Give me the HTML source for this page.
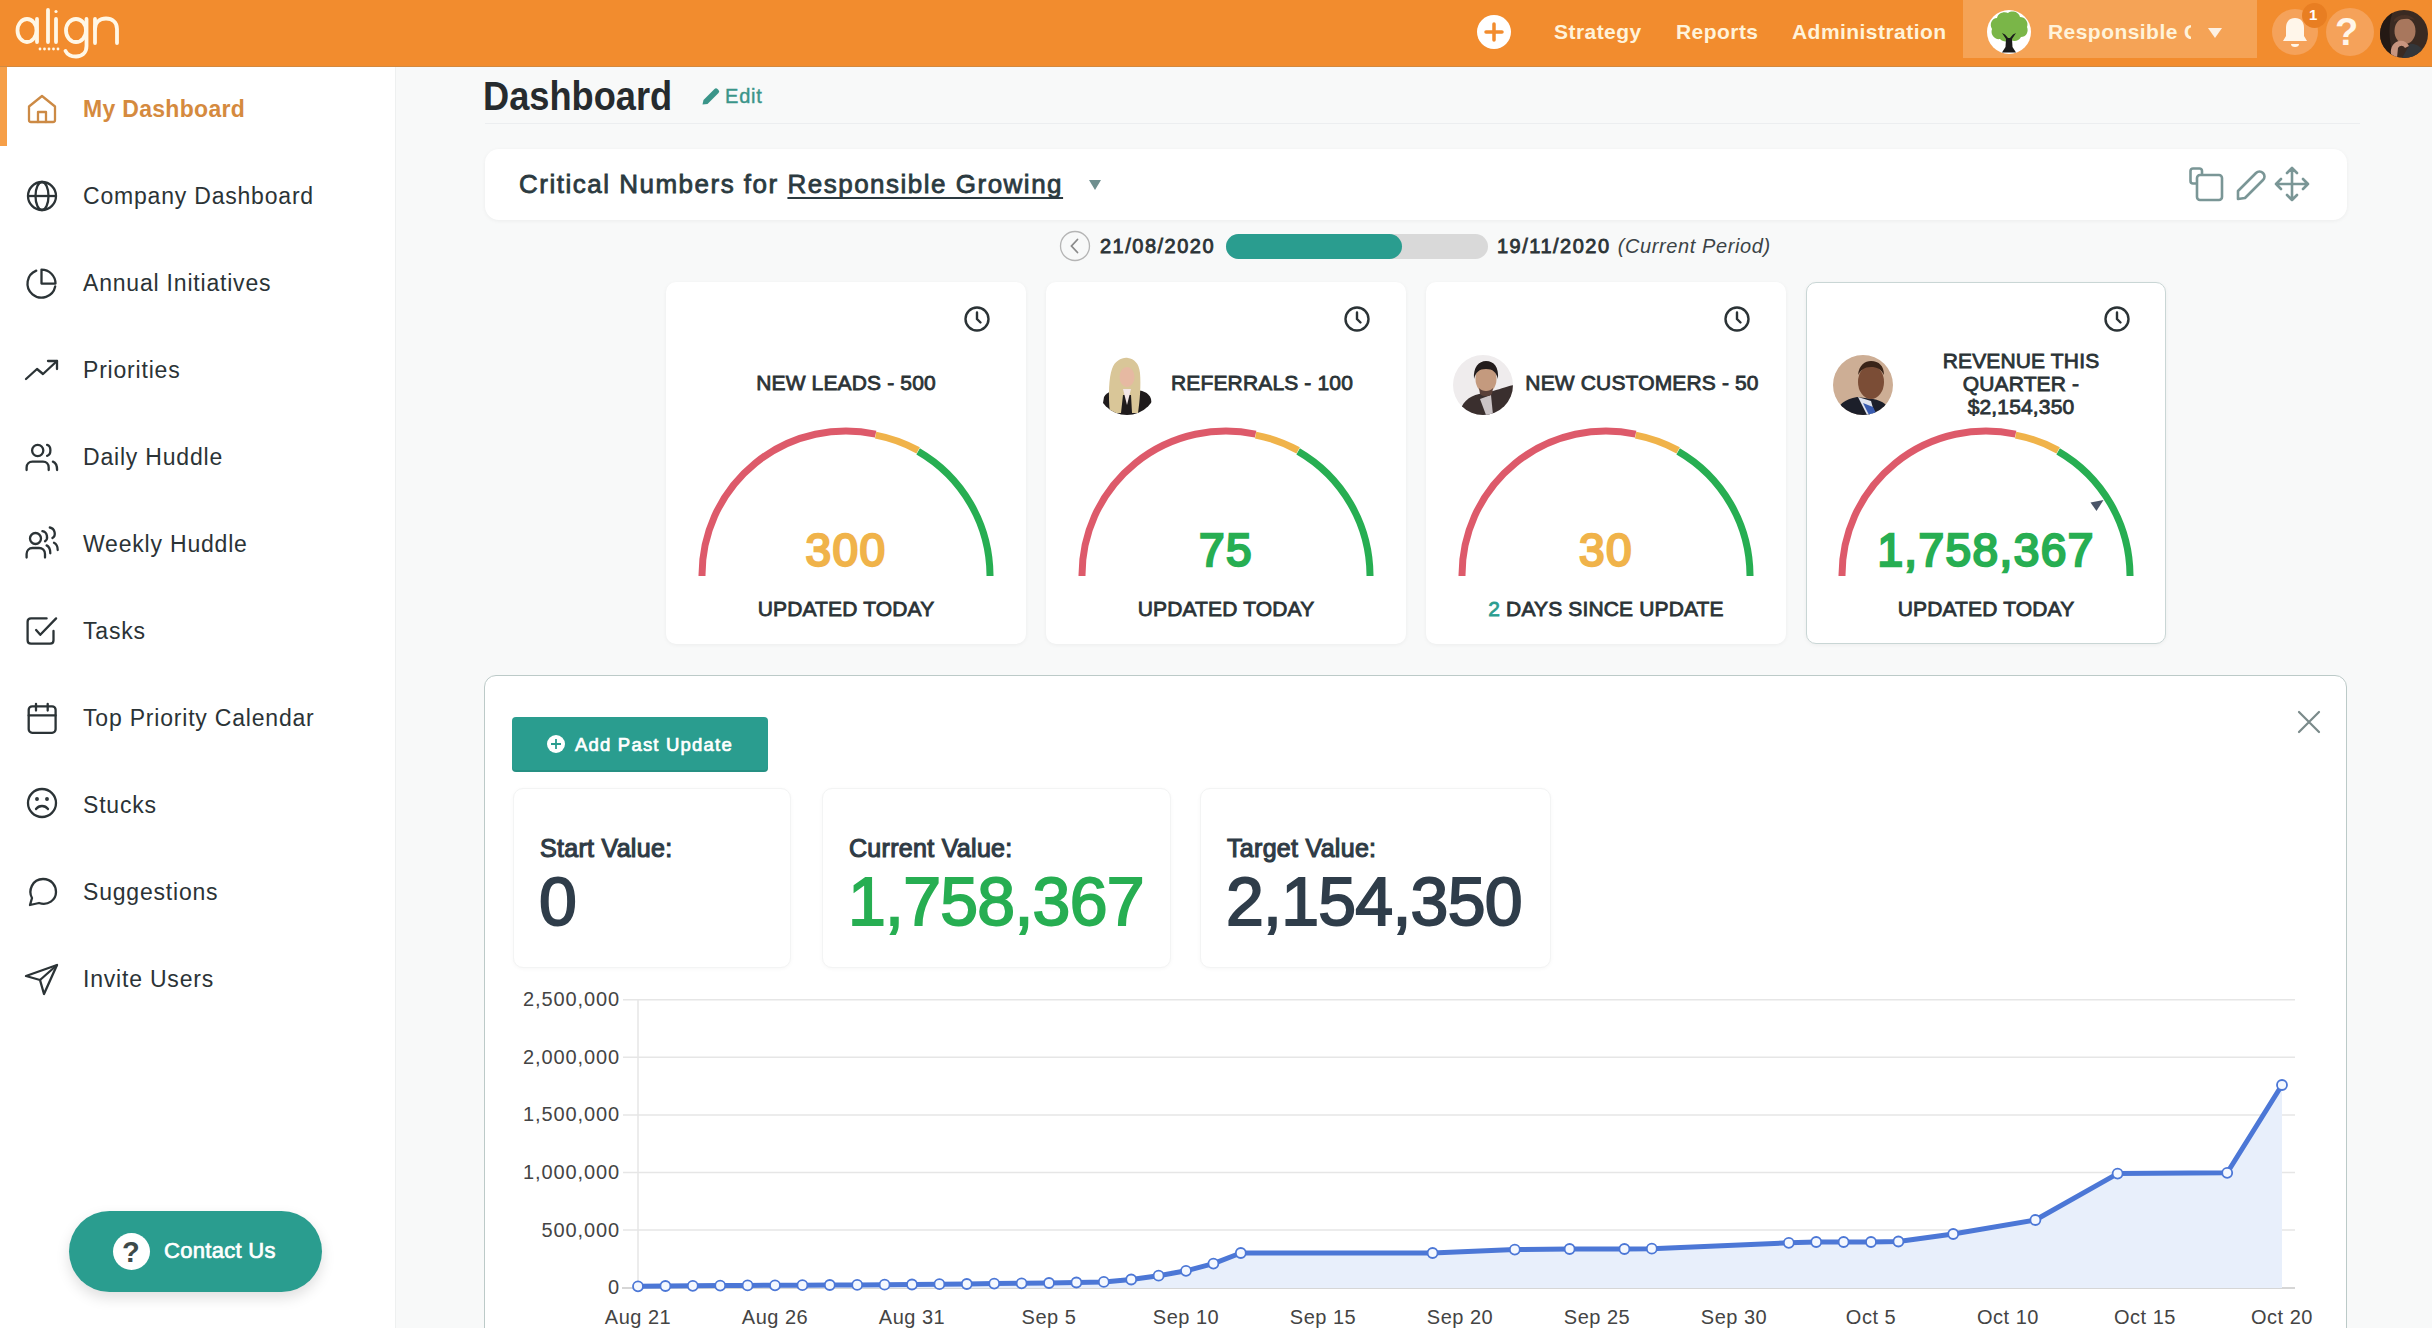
<!DOCTYPE html>
<html><head><meta charset="utf-8">
<style>
*{box-sizing:border-box;margin:0;padding:0}
html,body{width:2432px;height:1328px;overflow:hidden}
body{position:relative;background:#f8f9f9;font-family:"Liberation Sans",sans-serif;color:#2b3336}
.abs{position:absolute}
.t{position:absolute;white-space:nowrap;line-height:1}
#hdr{left:0;top:0;width:2432px;height:67px;background:#f28c2e;border-bottom:1.5px solid #d3893f}
#side{left:0;top:67px;width:396px;height:1261px;background:#fff;border-right:1px solid #eef0f0}
#activebar{left:0;top:67px;width:7px;height:79px;background:#f69f48}
.mi{position:absolute;left:83px;font-size:23px;letter-spacing:0.8px;color:#2b3336;white-space:nowrap;line-height:1}
.ic{position:absolute;left:24px;width:36px;height:36px}
.av{display:inline-block;width:60px;height:60px;border-radius:50%;margin-right:13px;flex:none;position:relative}
.av.abs{position:absolute;margin:0}
.avw{background:radial-gradient(ellipse 10px 14px at 50% 38%,#e9c3a6 0,#e2b898 90%,transparent 100%),radial-gradient(ellipse 18px 30px at 50% 45%,#e6d1a0 0,#d6b77e 80%,transparent 100%),radial-gradient(ellipse 30px 18px at 50% 100%,#222 0,#333 85%,transparent 100%),#fff}
.avm1{background:radial-gradient(ellipse 12px 15px at 55% 40%,#c99a7d 0,#b98a6c 85%,transparent 100%),radial-gradient(ellipse 15px 10px at 55% 18%,#2a2220 0,#2a2220 85%,transparent 100%),radial-gradient(ellipse 34px 20px at 50% 100%,#3a302c 0,#4a3c36 85%,transparent 100%),#ececec}
.avm2{background:radial-gradient(ellipse 13px 16px at 50% 42%,#5a3a2a 0,#4a2e20 85%,transparent 100%),radial-gradient(ellipse 34px 20px at 50% 100%,#1e2a44 0,#2a3550 85%,transparent 100%),#cbb29c}
.card{position:absolute;background:#fff;border-radius:14px;box-shadow:0 1px 4px rgba(0,0,0,0.05)}
</style></head><body>

<!-- HEADER -->
<div id="hdr" class="abs"></div>
<svg id="logo" class="abs" style="left:0;top:0" width="130" height="66" viewBox="0 0 130 66" fill="none" stroke="#fff7e6" stroke-width="3.8" stroke-linecap="round">
<ellipse cx="27" cy="30.5" rx="9.5" ry="11.5"/><path d="M37 19V42"/>
<path d="M48 10V42"/><path d="M56 19V42"/><circle cx="56" cy="11.5" r="1.6" fill="#fff7e6" stroke="none"/>
<circle cx="40" cy="49" r="1.4" fill="#fff7e6" stroke="none"/><circle cx="44.5" cy="49" r="1.4" fill="#fff7e6" stroke="none"/><circle cx="49" cy="49" r="1.4" fill="#fff7e6" stroke="none"/><circle cx="53.5" cy="49" r="1.4" fill="#fff7e6" stroke="none"/><circle cx="58" cy="49" r="1.4" fill="#fff7e6" stroke="none"/>
<ellipse cx="76" cy="30.5" rx="10" ry="11.5"/><path d="M86.5 19V46C86.5 53 82 56.5 76 56.5C71 56.5 67 54 65.5 51"/>
<path d="M95 19V43"/><path d="M95 29C95 22 100 18.5 106 18.5C112 18.5 117 22 117 29V43"/>
</svg>

<div class="abs" style="left:1477px;top:15px;width:34px;height:34px;border-radius:50%;background:#fff"></div>
<svg class="abs" style="left:1477px;top:15px" width="34" height="34"><path d="M17 9v16M9 17h16" stroke="#f28c2e" stroke-width="3.5" stroke-linecap="round"/></svg>

<div id="nav1" class="t" style="left:1554px;top:21px;font-size:21px;font-weight:bold;color:#fff3da;letter-spacing:0.45px">Strategy</div>
<div id="nav2" class="t" style="left:1676px;top:21px;font-size:21px;font-weight:bold;color:#fff3da;letter-spacing:0.45px">Reports</div>
<div id="nav3" class="t" style="left:1792px;top:21px;font-size:21px;font-weight:bold;color:#fff3da;letter-spacing:0.45px">Administration</div>

<div class="abs" style="left:1963px;top:0;width:294px;height:58px;background:#f5a356"></div>
<div class="abs" style="left:1987px;top:10px;width:44px;height:44px;border-radius:50%;background:#fff"></div>
<svg class="abs" style="left:1987px;top:10px" width="44" height="44" viewBox="0 0 44 44">
 <path d="M5 19 C2 14 5 8 10 8 C11 3 17 1 21 3 C25 0 32 2 33 7 C38 7 42 12 40 17 C42 22 39 27 34 27 C32 31 27 32 24 30 C21 32 15 32 13 29 C8 30 3 25 5 19 Z" fill="#7ab648"/>
 <path d="M15 23 L19 29 L18.5 37 L15 42.5 H29 L25.5 37 L25 29 L29 23 L26 24.5 L23 28 L21 28 L18 24.5 Z" fill="#1b1b1b"/>
</svg>
<div id="comp" class="t" style="left:2048px;top:21px;font-size:21px;font-weight:bold;color:#fff3da;letter-spacing:0.45px;width:143px;overflow:hidden">Responsible Growing</div>
<svg class="abs" style="left:2207px;top:27px" width="16" height="12"><path d="M1 1h14L8 11z" fill="#fdf1e4"/></svg>

<div class="abs" style="left:2272px;top:9px;width:46px;height:46px;border-radius:50%;background:#f5a25a"></div>
<svg class="abs" style="left:2272px;top:9px" width="46" height="46"><path d="M23 9c-6 0-9 4-9 10v8l-3 5h24l-3-5v-8c0-6-3-10-9-10z" fill="#fff6ea"/><path d="M19 35a4 3 0 0 0 8 0z" fill="#fff6ea"/></svg>
<div class="abs" style="left:2302px;top:3px;width:25px;height:25px;border-radius:50%;background:#e87e22"></div>
<div class="t" style="left:2309px;top:7px;font-size:15px;font-weight:bold;color:#fff">1</div>
<div class="abs" style="left:2326px;top:8px;width:48px;height:48px;border-radius:50%;background:#f5a25a"></div>
<div class="t" style="left:2335px;top:13px;font-size:38px;font-weight:bold;color:#fff6ea">?</div>
<svg class="abs" style="left:2380px;top:10px" width="48" height="48" viewBox="0 0 48 48"><defs><clipPath id="ch"><circle cx="24" cy="24" r="24"/></clipPath></defs><g clip-path="url(#ch)">
<rect width="48" height="48" fill="#3a2a22"/>
<path d="M0 0 H14 C8 10 8 30 14 48 H0 Z" fill="#241914"/>
<ellipse cx="25" cy="21" rx="10.5" ry="13" fill="#a8775d"/>
<path d="M14 10 C18 4 30 3 35 10 C31 8 20 8 14 12 Z" fill="#4a3226"/>
<path d="M30 34 C36 33 44 38 48 48 H22 Z" fill="#33363a"/>
<path d="M11 44 C10 37 14 32 19 31 C23 30 27 32 29 36 L25 38 C23 35 20 35 18 38 L17 48 H10 Z" fill="#c8957f"/>
</g></svg>

<!-- SIDEBAR -->
<div id="side" class="abs"></div>
<div id="activebar" class="abs"></div>


<!-- menu -->
<svg class="ic" style="top:91px" width="36" height="36" viewBox="0 0 36 36" fill="none" stroke="#cc8a45" stroke-width="2.3" stroke-linejoin="round" stroke-linecap="round"><path d="M5 15.5 L18 5 L31 15.5 V29 Q31 31 29 31 H7 Q5 31 5 29 Z"/><path d="M14 31 V21 H22 V31"/></svg>
<div id="m0" class="mi" style="top:98px;color:#d58a3e;font-weight:bold;letter-spacing:0.3px">My Dashboard</div>

<svg class="ic" style="top:178px" width="36" height="36" viewBox="0 0 36 36" fill="none" stroke="#2b3336" stroke-width="2.3"><circle cx="18" cy="18" r="14"/><path d="M4 18h28"/><ellipse cx="18" cy="18" rx="6.5" ry="14"/></svg>
<div id="m1" class="mi" style="top:185px">Company Dashboard</div>

<svg class="ic" style="top:265px" width="36" height="36" viewBox="0 0 36 36" fill="none" stroke="#2b3336" stroke-width="2.3" stroke-linecap="round" stroke-linejoin="round"><path d="M17.5 4.6 V18.6 H31.5 A14 14 0 0 0 17.5 4.6 Z"/><path d="M12.26 5.62 A14 14 0 1 0 31.19 21.5"/></svg>
<div id="m2" class="mi" style="top:272px">Annual Initiatives</div>

<svg class="ic" style="top:352px" width="36" height="36" viewBox="0 0 36 36" fill="none" stroke="#2b3336" stroke-width="2.3" stroke-linecap="round" stroke-linejoin="round"><path d="M2 27 L13 17 L19 22 L33 9"/><path d="M24 9 H33 V17"/></svg>
<div id="m3" class="mi" style="top:359px">Priorities</div>

<svg class="ic" style="top:439px" width="36" height="36" viewBox="0 0 36 36" fill="none" stroke="#2b3336" stroke-width="2.3" stroke-linecap="round" stroke-linejoin="round"><circle cx="13.7" cy="11.5" r="5.6"/><path d="M23.1 5.8 C27.5 6.8 27.5 15.8 23.1 16.8"/><path d="M2.6 31 V28.5 C2.6 25 5 22.6 8.5 22.6 H19 C22.5 22.6 24.7 25 24.7 28.5 V31"/><path d="M28.9 22.6 C31.7 23.6 33.1 26.5 33.1 31"/></svg>
<div id="m4" class="mi" style="top:446px">Daily Huddle</div>

<svg class="ic" style="top:526px" width="36" height="36" viewBox="0 0 36 36" fill="none" stroke="#2b3336" stroke-width="2.3" stroke-linecap="round" stroke-linejoin="round"><circle cx="11.5" cy="12.5" r="5.5"/><path d="M18.4 5.2 C23.5 6 24.5 13 21 15.2"/><path d="M25.8 1.5 C31 2.5 32.5 9.5 28.4 12"/><path d="M2.6 31.5 V28 C2.6 24.5 5 22 8.5 22 H15 C18.5 22 21 24.5 21 28 V31.5"/><path d="M22.6 19.4 C25 20.5 26.3 23.5 26.3 27.3"/><path d="M30 16.7 C32.3 17.8 33.7 20.5 33.7 24"/></svg>
<div id="m5" class="mi" style="top:533px">Weekly Huddle</div>

<svg class="ic" style="top:613px" width="36" height="36" viewBox="0 0 36 36" fill="none" stroke="#2b3336" stroke-width="2.3" stroke-linecap="round" stroke-linejoin="round"><path d="M22.6 5.4 H7 Q3.6 5.4 3.6 8.8 V27.3 Q3.6 30.7 7 30.7 H26.1 Q29.5 30.7 29.5 27.3 V18"/><path d="M12.1 17 L16.3 21.8 L32.1 5.4"/></svg>
<div id="m6" class="mi" style="top:620px">Tasks</div>

<svg class="ic" style="top:700px" width="36" height="36" viewBox="0 0 36 36" fill="none" stroke="#2b3336" stroke-width="2.3" stroke-linecap="round" stroke-linejoin="round"><rect x="4.7" y="6.3" width="26.9" height="26.5" rx="3.5"/><path d="M4.7 15.4 H31.6 M12 3.8 V10.6 M23.7 3.8 V10.6"/></svg>
<div id="m7" class="mi" style="top:707px">Top Priority Calendar</div>

<svg class="ic" style="top:785px" width="36" height="36" viewBox="0 0 36 36" fill="none" stroke="#2b3336" stroke-width="2.3" stroke-linecap="round"><circle cx="18" cy="18" r="14"/><circle cx="13" cy="14" r="0.8" fill="#2b3336"/><circle cx="23" cy="14" r="0.8" fill="#2b3336"/><path d="M12 24 C15 20 21 20 24 24"/></svg>
<div id="m8" class="mi" style="top:794px">Stucks</div>

<svg class="ic" style="top:874px" width="36" height="36" viewBox="0 0 36 36" fill="none" stroke="#2b3336" stroke-width="2.3" stroke-linejoin="round"><path d="M6 31 L8 24 C4 17 8 5 19 5 C28 5 32 12 32 18 C32 26 24 32 15 29 Z"/></svg>
<div id="m9" class="mi" style="top:881px">Suggestions</div>

<svg class="ic" style="top:961px" width="36" height="36" viewBox="0 0 36 36" fill="none" stroke="#2b3336" stroke-width="2.3" stroke-linejoin="round"><path d="M2 15 L33 4 L20 33 L16 19 Z"/><path d="M16 19 L33 4"/></svg>
<div id="m10" class="mi" style="top:968px">Invite Users</div>

<!-- contact us -->
<div id="contact" class="abs" style="left:69px;top:1211px;width:253px;height:81px;border-radius:41px;background:#2a9d8f;box-shadow:0 6px 14px rgba(0,0,0,0.13)"></div>
<div class="abs" style="left:113px;top:1233px;width:37px;height:37px;border-radius:50%;background:#fff"></div>
<div class="t" style="left:122px;top:1238px;font-size:29px;font-weight:bold;color:#3d4a4a">?</div>
<div id="contactt" class="t" style="left:164px;top:1240px;font-size:22px;color:#fff;letter-spacing:0.3px;-webkit-text-stroke:0.7px #fff">Contact Us</div>

<!-- CONTENT -->
<div id="ttl" class="t" style="left:483px;top:76px;font-size:40px;font-weight:bold;color:#262b2e;letter-spacing:0px;transform:scaleX(0.905);transform-origin:0 0">Dashboard</div>
<svg class="abs" style="left:700px;top:86px" width="22" height="20" viewBox="0 0 22 20"><path d="M2.5 18.5 L3.5 14 L14.5 3 Q16 1.5 17.5 3 L18.5 4 Q20 5.5 18.5 7 L7.5 18 Z" fill="#3a9589"/></svg>
<div id="edit" class="t" style="left:725px;top:86px;font-size:20px;color:#3a9589;letter-spacing:0.8px;-webkit-text-stroke:0.4px #3a9589">Edit</div>
<div class="abs" style="left:485px;top:123px;width:1875px;height:1px;background:#eceef0"></div>
<div id="cn" class="card" style="left:485px;top:149px;width:1862px;height:71px;border-radius:14px"></div>
<div id="cnt" class="t" style="left:519px;top:171px;font-size:26px;color:#2b3a40;letter-spacing:1.5px;-webkit-text-stroke:0.8px #2b3a40">Critical Numbers for <span style="text-decoration:underline;text-underline-offset:4px;text-decoration-thickness:2px;text-decoration-skip-ink:none">Responsible Growing</span></div>
<svg class="abs" style="left:1088px;top:179px" width="14" height="12"><path d="M1 1h12L7 11z" fill="#6f8f8f"/></svg>
<svg class="abs" style="left:2186px;top:164px" width="128" height="40" viewBox="0 0 128 40" fill="none" stroke="#7a9696" stroke-width="2.6" stroke-linecap="round" stroke-linejoin="round">
<path d="M16 10 V7 C16 5.5 15 4.5 13.5 4.5 H7 C5.5 4.5 4.5 5.5 4.5 7 V17 C4.5 18.5 5.5 19.5 7 19.5 H10"/>
<rect x="11" y="11" width="25" height="25" rx="3"/>
<path d="M52 35 L52 27 L70 9 C72 7 75 7 77 9 C79 11 79 14 77 16 L59 34 Z"/>
<path d="M106 4 V36 M90 20 H122 M101 9 L106 4 L111 9 M101 31 L106 36 L111 31 M95 15 L90 20 L95 25 M117 15 L122 20 L117 25"/>
</svg>
<svg class="abs" style="left:1059px;top:230px" width="32" height="32"><circle cx="16" cy="16" r="14.5" fill="none" stroke="#b5b5b5" stroke-width="1.3"/><path d="M18.5 9.5 L12.5 16 L18.5 22.5" fill="none" stroke="#8a8a8a" stroke-width="1.8" stroke-linecap="round"/></svg>
<div id="d1" class="t" style="left:1100px;top:236px;font-size:20px;color:#2b3336;letter-spacing:1.5px;-webkit-text-stroke:0.8px #2b3336">21/08/2020</div>
<div class="abs" style="left:1226px;top:234px;width:262px;height:25px;border-radius:12.5px;background:#d9d9d9"></div>
<div class="abs" style="left:1226px;top:234px;width:176px;height:25px;border-radius:12.5px;background:#2a9d8f"></div>
<div id="d2" class="t" style="left:1497px;top:236px;font-size:20px;color:#2b3336;letter-spacing:1.5px;-webkit-text-stroke:0.8px #2b3336">19/11/2020 <i style="color:#3b4346;letter-spacing:0.6px;-webkit-text-stroke:0px">(Current Period)</i></div>
<div id="k0" class="card" style="left:666px;top:282px;width:360px;height:362px;border-radius:10px;"></div>
<svg class="abs" style="left:963px;top:305px" width="28" height="28" viewBox="0 0 28 28" fill="none" stroke="#2b3336" stroke-width="2.4" stroke-linecap="round"><circle cx="14" cy="14" r="11.5"/><path d="M14 7.5 V14 L17.5 17.5"/></svg>
<svg class="abs" style="left:666px;top:283px" width="360" height="361" viewBox="666 283 360 361"><path d="M702.00 576.00 L702.00 575.00 A144 144 0 0 1 875.64 434.08" fill="none" stroke="#dd5a6a" stroke-width="7"/><path d="M875.64 435.08 A144 144 0 0 1 918.13 450.37" fill="none" stroke="#f0b34a" stroke-width="7"/><path d="M918.13 451.37 A144 144 0 0 1 990.00 575.00 L990.00 576.00" fill="none" stroke="#27ae52" stroke-width="7"/></svg>
<div class="t" style="left:666px;top:372px;width:360px;text-align:center;font-size:21px;color:#2b3336;letter-spacing:0.15px;-webkit-text-stroke:0.8px #2b3336"><span id="kt0">NEW LEADS - 500</span></div>
<div id="kv0" class="t" style="left:666px;top:527px;width:360px;text-align:center;font-size:46px;color:#f0b34a;letter-spacing:1.4px;-webkit-text-stroke:2.4px #f0b34a">300</div>
<div id="kf0" class="t" style="left:666px;top:598px;width:360px;text-align:center;font-size:21px;color:#2b3336;letter-spacing:0.15px;-webkit-text-stroke:0.8px #2b3336">UPDATED TODAY</div>
<div id="k1" class="card" style="left:1046px;top:282px;width:360px;height:362px;border-radius:10px;"></div>
<svg class="abs" style="left:1343px;top:305px" width="28" height="28" viewBox="0 0 28 28" fill="none" stroke="#2b3336" stroke-width="2.4" stroke-linecap="round"><circle cx="14" cy="14" r="11.5"/><path d="M14 7.5 V14 L17.5 17.5"/></svg>
<svg class="abs" style="left:1046px;top:283px" width="360" height="361" viewBox="1046 283 360 361"><path d="M1082.00 576.00 L1082.00 575.00 A144 144 0 0 1 1255.64 434.08" fill="none" stroke="#dd5a6a" stroke-width="7"/><path d="M1255.64 435.08 A144 144 0 0 1 1298.13 450.37" fill="none" stroke="#f0b34a" stroke-width="7"/><path d="M1298.13 451.37 A144 144 0 0 1 1370.00 575.00 L1370.00 576.00" fill="none" stroke="#27ae52" stroke-width="7"/></svg>
<div class="t" style="left:1082px;top:372px;width:360px;text-align:center;font-size:21px;color:#2b3336;letter-spacing:0.15px;-webkit-text-stroke:0.8px #2b3336"><span id="kt1">REFERRALS - 100</span></div>
<svg class="abs" style="left:1097px;top:355px" width="60" height="60" viewBox="0 0 60 60"><defs><clipPath id="cw"><circle cx="30" cy="30" r="30"/></clipPath></defs><g clip-path="url(#cw)">
<rect width="60" height="60" fill="#fff"/>
<path d="M7 42 C10 36 18 35 22 35 L38 35 C44 35 52 37 54 44 L56 60 L4 60 Z" fill="#1f1b1c"/>
<path d="M13 58 C11 40 12 22 15 14 C18 5 26 2 31 3 C37 4 42 8 43 18 C44 30 43 45 41 58 L35 58 L34 40 L26 40 L24 58 Z" fill="#d9c698"/>
<ellipse cx="30" cy="22" rx="7.5" ry="10" fill="#e6b9a2"/>
<path d="M26 34 L30 50 L34 34 Z" fill="#f3e6e6"/>
</g></svg>
<div id="kv1" class="t" style="left:1046px;top:527px;width:360px;text-align:center;font-size:46px;color:#27ae52;letter-spacing:1.4px;-webkit-text-stroke:2.4px #27ae52">75</div>
<div id="kf1" class="t" style="left:1046px;top:598px;width:360px;text-align:center;font-size:21px;color:#2b3336;letter-spacing:0.15px;-webkit-text-stroke:0.8px #2b3336">UPDATED TODAY</div>
<div id="k2" class="card" style="left:1426px;top:282px;width:360px;height:362px;border-radius:10px;"></div>
<svg class="abs" style="left:1723px;top:305px" width="28" height="28" viewBox="0 0 28 28" fill="none" stroke="#2b3336" stroke-width="2.4" stroke-linecap="round"><circle cx="14" cy="14" r="11.5"/><path d="M14 7.5 V14 L17.5 17.5"/></svg>
<svg class="abs" style="left:1426px;top:283px" width="360" height="361" viewBox="1426 283 360 361"><path d="M1462.00 576.00 L1462.00 575.00 A144 144 0 0 1 1635.64 434.08" fill="none" stroke="#dd5a6a" stroke-width="7"/><path d="M1635.64 435.08 A144 144 0 0 1 1678.13 450.37" fill="none" stroke="#f0b34a" stroke-width="7"/><path d="M1678.13 451.37 A144 144 0 0 1 1750.00 575.00 L1750.00 576.00" fill="none" stroke="#27ae52" stroke-width="7"/></svg>
<div class="t" style="left:1462px;top:372px;width:360px;text-align:center;font-size:21px;color:#2b3336;letter-spacing:0.15px;-webkit-text-stroke:0.8px #2b3336"><span id="kt2">NEW CUSTOMERS - 50</span></div>
<svg class="abs" style="left:1453px;top:355px" width="60" height="60" viewBox="0 0 60 60"><defs><clipPath id="cm1"><circle cx="30" cy="30" r="30"/></clipPath></defs><g clip-path="url(#cm1)">
<rect width="60" height="60" fill="#efeced"/>
<path d="M6 60 C8 48 16 41 26 39 L40 36 C50 33 58 30 62 30 L62 60 Z" fill="#3a2f2e"/>
<path d="M27 44 L33 60 L40 60 L38 40 Z" fill="#cbc4c6"/>
<ellipse cx="33" cy="24" rx="10.5" ry="14" fill="#c49a7e"/>
<path d="M21 24 C20 12 26 6 33 6 C41 6 46 12 45 24 C43 17 40 14 33 14 C26 14 23 17 21 24 Z" fill="#231c1c"/>
<path d="M26 33 C29 37 37 37 40 33 L39 39 C36 42 30 42 27 39 Z" fill="#5a4038"/>
</g></svg>
<div id="kv2" class="t" style="left:1426px;top:527px;width:360px;text-align:center;font-size:46px;color:#f0b34a;letter-spacing:1.4px;-webkit-text-stroke:2.4px #f0b34a">30</div>
<div id="kf2" class="t" style="left:1426px;top:598px;width:360px;text-align:center;font-size:21px;color:#2b3336;letter-spacing:0.15px;-webkit-text-stroke:0.8px #2b3336"><span style="color:#2a9d8f;-webkit-text-stroke-color:#2a9d8f">2</span> DAYS SINCE UPDATE</div>
<div id="k3" class="card" style="left:1806px;top:282px;width:360px;height:362px;border-radius:10px;border:1.5px solid #c9d6d5;"></div>
<svg class="abs" style="left:2103px;top:305px" width="28" height="28" viewBox="0 0 28 28" fill="none" stroke="#2b3336" stroke-width="2.4" stroke-linecap="round"><circle cx="14" cy="14" r="11.5"/><path d="M14 7.5 V14 L17.5 17.5"/></svg>
<svg class="abs" style="left:1806px;top:283px" width="360" height="361" viewBox="1806 283 360 361"><path d="M1842.00 576.00 L1842.00 575.00 A144 144 0 0 1 2015.64 434.08" fill="none" stroke="#dd5a6a" stroke-width="7"/><path d="M2015.64 435.08 A144 144 0 0 1 2058.13 450.37" fill="none" stroke="#f0b34a" stroke-width="7"/><path d="M2058.13 451.37 A144 144 0 0 1 2130.00 575.00 L2130.00 576.00" fill="none" stroke="#27ae52" stroke-width="7"/><path d="M2090.5 502.5 L2103.5 500 L2096.5 511 Z" fill="#4a5568"/></svg>
<svg class="abs" style="left:1833px;top:355px" width="60" height="60" viewBox="0 0 60 60"><defs><clipPath id="cm2"><circle cx="30" cy="30" r="30"/></clipPath></defs><g clip-path="url(#cm2)">
<rect width="60" height="60" fill="#cdae95"/>
<path d="M2 60 C4 50 12 44 24 42 L40 44 C50 46 56 50 58 60 Z" fill="#1c1f2a"/>
<path d="M25 42 L34 60 L42 60 L38 46 Z" fill="#dfe3ee"/>
<path d="M30 48 L36 60 L44 60 L40 52 Z" fill="#3a5cb0"/>
<ellipse cx="38" cy="27" rx="13" ry="17" fill="#7b4d36"/>
<path d="M25 20 C26 10 32 6 38 6 C46 6 51 11 51 20 C48 14 44 12 38 12 C31 12 28 15 25 20 Z" fill="#3a2418"/>
</g></svg>
<div class="t" id="kt3_0" style="left:1921px;top:350px;width:200px;text-align:center;font-size:21px;color:#2b3336;letter-spacing:0.15px;-webkit-text-stroke:0.8px #2b3336">REVENUE THIS</div>
<div class="t" id="kt3_1" style="left:1921px;top:373px;width:200px;text-align:center;font-size:21px;color:#2b3336;letter-spacing:0.15px;-webkit-text-stroke:0.8px #2b3336">QUARTER -</div>
<div class="t" id="kt3_2" style="left:1921px;top:396px;width:200px;text-align:center;font-size:21px;color:#2b3336;letter-spacing:0.15px;-webkit-text-stroke:0.8px #2b3336">$2,154,350</div>
<div id="kv3" class="t" style="left:1806px;top:527px;width:360px;text-align:center;font-size:46px;color:#27ae52;letter-spacing:1.4px;-webkit-text-stroke:2.4px #27ae52">1,758,367</div>
<div id="kf3" class="t" style="left:1806px;top:598px;width:360px;text-align:center;font-size:21px;color:#2b3336;letter-spacing:0.15px;-webkit-text-stroke:0.8px #2b3336">UPDATED TODAY</div>
<div id="panel" class="abs" style="left:484px;top:675px;width:1863px;height:700px;background:#fff;border:1.3px solid #bccac8;border-radius:12px"></div>
<svg class="abs" style="left:2297px;top:710px" width="24" height="24"><path d="M2 2 L22 22 M22 2 L2 22" stroke="#7a8a8a" stroke-width="2.2" stroke-linecap="round"/></svg>
<div id="btn" class="abs" style="left:512px;top:717px;width:256px;height:55px;border-radius:4px;background:#2a9d8f;box-shadow:inset 0 -2px 0 rgba(0,0,0,0.08)"></div>
<svg class="abs" style="left:546px;top:734px" width="20" height="20"><circle cx="10" cy="10" r="9" fill="#fff"/><path d="M10 5v10M5 10h10" stroke="#2a9d8f" stroke-width="1.8"/></svg>
<div id="btnt" class="t" style="left:575px;top:735.5px;font-size:18.5px;color:#fff;letter-spacing:1.2px;-webkit-text-stroke:0.7px #fff">Add Past Update</div>
<div class="abs" style="left:513px;top:788px;width:278px;height:180px;background:#fff;border:1px solid #f3f4f4;border-radius:10px;box-shadow:0 1px 4px rgba(0,0,0,0.035)"></div>
<div id="vl0" class="t" style="left:540px;top:836px;font-size:25px;color:#2f3b45;letter-spacing:0.3px;-webkit-text-stroke:1.1px #2f3b45">Start Value:</div>
<div id="vv0" class="t" style="left:539px;top:867px;font-size:68px;color:#2f3d4a;letter-spacing:-0.75px;-webkit-text-stroke:1.9px #2f3d4a">0</div>
<div class="abs" style="left:822px;top:788px;width:349px;height:180px;background:#fff;border:1px solid #f3f4f4;border-radius:10px;box-shadow:0 1px 4px rgba(0,0,0,0.035)"></div>
<div id="vl1" class="t" style="left:849px;top:836px;font-size:25px;color:#2f3b45;letter-spacing:0.3px;-webkit-text-stroke:1.1px #2f3b45">Current Value:</div>
<div id="vv1" class="t" style="left:848px;top:867px;font-size:68px;color:#27ae52;letter-spacing:-0.75px;-webkit-text-stroke:1.9px #27ae52">1,758,367</div>
<div class="abs" style="left:1200px;top:788px;width:351px;height:180px;background:#fff;border:1px solid #f3f4f4;border-radius:10px;box-shadow:0 1px 4px rgba(0,0,0,0.035)"></div>
<div id="vl2" class="t" style="left:1227px;top:836px;font-size:25px;color:#2f3b45;letter-spacing:0.3px;-webkit-text-stroke:1.1px #2f3b45">Target Value:</div>
<div id="vv2" class="t" style="left:1226px;top:867px;font-size:68px;color:#2f3d4a;letter-spacing:-0.75px;-webkit-text-stroke:1.9px #2f3d4a">2,154,350</div>
<svg class="abs" style="left:0;top:0" width="2432" height="1328" viewBox="0 0 2432 1328"><path d="M623 999.7 H2295" stroke="#e6e6e6" stroke-width="1.5"/><path d="M623 1057.3 H2295" stroke="#e6e6e6" stroke-width="1.5"/><path d="M623 1114.9 H2295" stroke="#e6e6e6" stroke-width="1.5"/><path d="M623 1172.5 H2295" stroke="#e6e6e6" stroke-width="1.5"/><path d="M623 1230.1 H2295" stroke="#e6e6e6" stroke-width="1.5"/><path d="M638 999.7 V1288" stroke="#e6e6e6" stroke-width="1.5"/><path d="M622 1288 H2295" stroke="#c8c8c8" stroke-width="1.5"/><polygon points="638,1288 638.0,1286.3 665.4,1286.0 692.8,1285.8 720.2,1285.6 747.6,1285.4 775.0,1285.3 802.4,1285.2 829.8,1285.0 857.2,1284.9 884.6,1284.7 912.0,1284.5 939.4,1284.2 966.8,1284.0 994.2,1283.6 1021.6,1283.3 1049.0,1283.0 1076.4,1282.5 1103.8,1281.9 1131.2,1279.5 1158.6,1275.7 1186.0,1270.8 1213.4,1263.6 1240.8,1253.0 1432.6,1253.0 1514.8,1249.6 1569.6,1249.0 1624.4,1249.0 1651.8,1248.7 1788.8,1242.8 1816.2,1242.0 1843.6,1242.0 1871.0,1242.0 1898.4,1241.5 1953.2,1234.0 2035.4,1220.0 2117.6,1173.6 2227.2,1172.8 2282.0,1085.0 2282,1288" fill="#e8effb"/><polyline points="638.0,1286.3 665.4,1286.0 692.8,1285.8 720.2,1285.6 747.6,1285.4 775.0,1285.3 802.4,1285.2 829.8,1285.0 857.2,1284.9 884.6,1284.7 912.0,1284.5 939.4,1284.2 966.8,1284.0 994.2,1283.6 1021.6,1283.3 1049.0,1283.0 1076.4,1282.5 1103.8,1281.9 1131.2,1279.5 1158.6,1275.7 1186.0,1270.8 1213.4,1263.6 1240.8,1253.0 1432.6,1253.0 1514.8,1249.6 1569.6,1249.0 1624.4,1249.0 1651.8,1248.7 1788.8,1242.8 1816.2,1242.0 1843.6,1242.0 1871.0,1242.0 1898.4,1241.5 1953.2,1234.0 2035.4,1220.0 2117.6,1173.6 2227.2,1172.8 2282.0,1085.0" fill="none" stroke="#4c77d6" stroke-width="5" stroke-linejoin="round"/><circle cx="638.0" cy="1286.3" r="5" fill="#f4f8ff" stroke="#4c77d6" stroke-width="1.8"/><circle cx="665.4" cy="1286.0" r="5" fill="#f4f8ff" stroke="#4c77d6" stroke-width="1.8"/><circle cx="692.8" cy="1285.8" r="5" fill="#f4f8ff" stroke="#4c77d6" stroke-width="1.8"/><circle cx="720.2" cy="1285.6" r="5" fill="#f4f8ff" stroke="#4c77d6" stroke-width="1.8"/><circle cx="747.6" cy="1285.4" r="5" fill="#f4f8ff" stroke="#4c77d6" stroke-width="1.8"/><circle cx="775.0" cy="1285.3" r="5" fill="#f4f8ff" stroke="#4c77d6" stroke-width="1.8"/><circle cx="802.4" cy="1285.2" r="5" fill="#f4f8ff" stroke="#4c77d6" stroke-width="1.8"/><circle cx="829.8" cy="1285.0" r="5" fill="#f4f8ff" stroke="#4c77d6" stroke-width="1.8"/><circle cx="857.2" cy="1284.9" r="5" fill="#f4f8ff" stroke="#4c77d6" stroke-width="1.8"/><circle cx="884.6" cy="1284.7" r="5" fill="#f4f8ff" stroke="#4c77d6" stroke-width="1.8"/><circle cx="912.0" cy="1284.5" r="5" fill="#f4f8ff" stroke="#4c77d6" stroke-width="1.8"/><circle cx="939.4" cy="1284.2" r="5" fill="#f4f8ff" stroke="#4c77d6" stroke-width="1.8"/><circle cx="966.8" cy="1284.0" r="5" fill="#f4f8ff" stroke="#4c77d6" stroke-width="1.8"/><circle cx="994.2" cy="1283.6" r="5" fill="#f4f8ff" stroke="#4c77d6" stroke-width="1.8"/><circle cx="1021.6" cy="1283.3" r="5" fill="#f4f8ff" stroke="#4c77d6" stroke-width="1.8"/><circle cx="1049.0" cy="1283.0" r="5" fill="#f4f8ff" stroke="#4c77d6" stroke-width="1.8"/><circle cx="1076.4" cy="1282.5" r="5" fill="#f4f8ff" stroke="#4c77d6" stroke-width="1.8"/><circle cx="1103.8" cy="1281.9" r="5" fill="#f4f8ff" stroke="#4c77d6" stroke-width="1.8"/><circle cx="1131.2" cy="1279.5" r="5" fill="#f4f8ff" stroke="#4c77d6" stroke-width="1.8"/><circle cx="1158.6" cy="1275.7" r="5" fill="#f4f8ff" stroke="#4c77d6" stroke-width="1.8"/><circle cx="1186.0" cy="1270.8" r="5" fill="#f4f8ff" stroke="#4c77d6" stroke-width="1.8"/><circle cx="1213.4" cy="1263.6" r="5" fill="#f4f8ff" stroke="#4c77d6" stroke-width="1.8"/><circle cx="1240.8" cy="1253.0" r="5" fill="#f4f8ff" stroke="#4c77d6" stroke-width="1.8"/><circle cx="1432.6" cy="1253.0" r="5" fill="#f4f8ff" stroke="#4c77d6" stroke-width="1.8"/><circle cx="1514.8" cy="1249.6" r="5" fill="#f4f8ff" stroke="#4c77d6" stroke-width="1.8"/><circle cx="1569.6" cy="1249.0" r="5" fill="#f4f8ff" stroke="#4c77d6" stroke-width="1.8"/><circle cx="1624.4" cy="1249.0" r="5" fill="#f4f8ff" stroke="#4c77d6" stroke-width="1.8"/><circle cx="1651.8" cy="1248.7" r="5" fill="#f4f8ff" stroke="#4c77d6" stroke-width="1.8"/><circle cx="1788.8" cy="1242.8" r="5" fill="#f4f8ff" stroke="#4c77d6" stroke-width="1.8"/><circle cx="1816.2" cy="1242.0" r="5" fill="#f4f8ff" stroke="#4c77d6" stroke-width="1.8"/><circle cx="1843.6" cy="1242.0" r="5" fill="#f4f8ff" stroke="#4c77d6" stroke-width="1.8"/><circle cx="1871.0" cy="1242.0" r="5" fill="#f4f8ff" stroke="#4c77d6" stroke-width="1.8"/><circle cx="1898.4" cy="1241.5" r="5" fill="#f4f8ff" stroke="#4c77d6" stroke-width="1.8"/><circle cx="1953.2" cy="1234.0" r="5" fill="#f4f8ff" stroke="#4c77d6" stroke-width="1.8"/><circle cx="2035.4" cy="1220.0" r="5" fill="#f4f8ff" stroke="#4c77d6" stroke-width="1.8"/><circle cx="2117.6" cy="1173.6" r="5" fill="#f4f8ff" stroke="#4c77d6" stroke-width="1.8"/><circle cx="2227.2" cy="1172.8" r="5" fill="#f4f8ff" stroke="#4c77d6" stroke-width="1.8"/><circle cx="2282.0" cy="1085.0" r="5" fill="#f4f8ff" stroke="#4c77d6" stroke-width="1.8"/></svg>
<div class="t yl" style="left:420px;top:989.2px;width:200px;text-align:right;font-size:20px;color:#444;letter-spacing:0.9px">2,500,000</div>
<div class="t yl" style="left:420px;top:1046.8px;width:200px;text-align:right;font-size:20px;color:#444;letter-spacing:0.9px">2,000,000</div>
<div class="t yl" style="left:420px;top:1104.4px;width:200px;text-align:right;font-size:20px;color:#444;letter-spacing:0.9px">1,500,000</div>
<div class="t yl" style="left:420px;top:1162.0px;width:200px;text-align:right;font-size:20px;color:#444;letter-spacing:0.9px">1,000,000</div>
<div class="t yl" style="left:420px;top:1219.6px;width:200px;text-align:right;font-size:20px;color:#444;letter-spacing:0.9px">500,000</div>
<div class="t yl" style="left:420px;top:1277.2px;width:200px;text-align:right;font-size:20px;color:#444;letter-spacing:0.9px">0</div>
<div class="t xl" style="left:558.0px;top:1307px;width:160px;text-align:center;font-size:20px;color:#444;letter-spacing:0.5px">Aug 21</div>
<div class="t xl" style="left:695.0px;top:1307px;width:160px;text-align:center;font-size:20px;color:#444;letter-spacing:0.5px">Aug 26</div>
<div class="t xl" style="left:832.0px;top:1307px;width:160px;text-align:center;font-size:20px;color:#444;letter-spacing:0.5px">Aug 31</div>
<div class="t xl" style="left:969.0px;top:1307px;width:160px;text-align:center;font-size:20px;color:#444;letter-spacing:0.5px">Sep 5</div>
<div class="t xl" style="left:1106.0px;top:1307px;width:160px;text-align:center;font-size:20px;color:#444;letter-spacing:0.5px">Sep 10</div>
<div class="t xl" style="left:1243.0px;top:1307px;width:160px;text-align:center;font-size:20px;color:#444;letter-spacing:0.5px">Sep 15</div>
<div class="t xl" style="left:1380.0px;top:1307px;width:160px;text-align:center;font-size:20px;color:#444;letter-spacing:0.5px">Sep 20</div>
<div class="t xl" style="left:1517.0px;top:1307px;width:160px;text-align:center;font-size:20px;color:#444;letter-spacing:0.5px">Sep 25</div>
<div class="t xl" style="left:1654.0px;top:1307px;width:160px;text-align:center;font-size:20px;color:#444;letter-spacing:0.5px">Sep 30</div>
<div class="t xl" style="left:1791.0px;top:1307px;width:160px;text-align:center;font-size:20px;color:#444;letter-spacing:0.5px">Oct 5</div>
<div class="t xl" style="left:1928.0px;top:1307px;width:160px;text-align:center;font-size:20px;color:#444;letter-spacing:0.5px">Oct 10</div>
<div class="t xl" style="left:2065.0px;top:1307px;width:160px;text-align:center;font-size:20px;color:#444;letter-spacing:0.5px">Oct 15</div>
<div class="t xl" style="left:2202.0px;top:1307px;width:160px;text-align:center;font-size:20px;color:#444;letter-spacing:0.5px">Oct 20</div>
</body></html>
